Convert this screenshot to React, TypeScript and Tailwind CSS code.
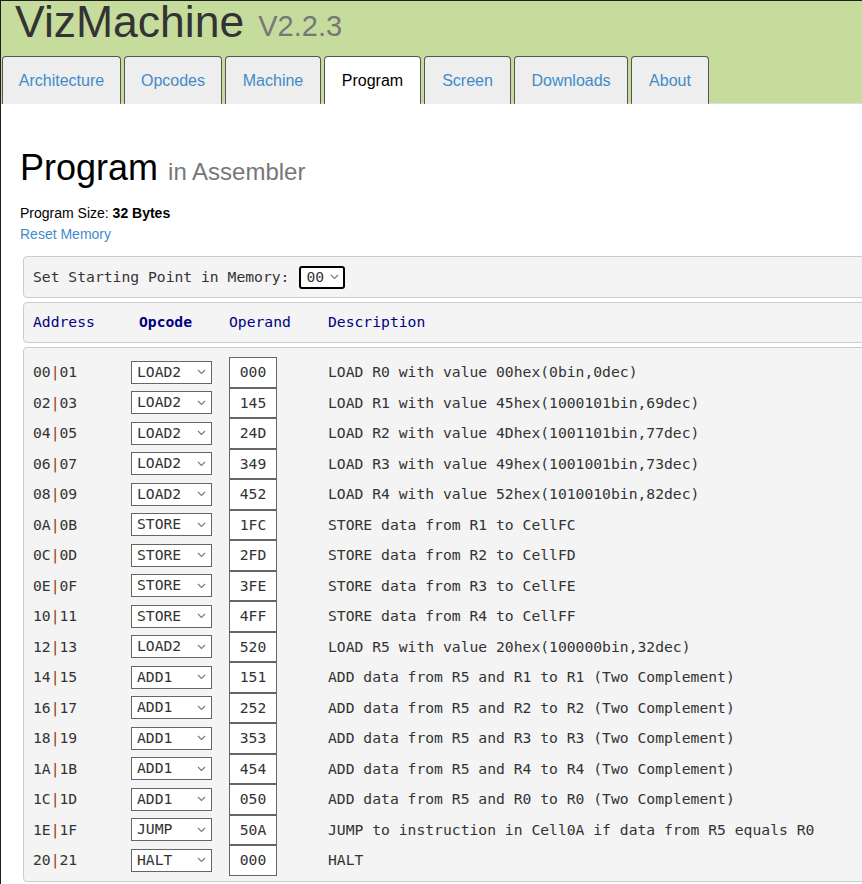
import React from "react";

type Row = { addr: [string, string]; op: string; operand: string; desc: string };

const rows: Row[] = [
  { addr: ["00", "01"], op: "LOAD2", operand: "000", desc: "LOAD R0 with value 00hex(0bin,0dec)" },
  { addr: ["02", "03"], op: "LOAD2", operand: "145", desc: "LOAD R1 with value 45hex(1000101bin,69dec)" },
  { addr: ["04", "05"], op: "LOAD2", operand: "24D", desc: "LOAD R2 with value 4Dhex(1001101bin,77dec)" },
  { addr: ["06", "07"], op: "LOAD2", operand: "349", desc: "LOAD R3 with value 49hex(1001001bin,73dec)" },
  { addr: ["08", "09"], op: "LOAD2", operand: "452", desc: "LOAD R4 with value 52hex(1010010bin,82dec)" },
  { addr: ["0A", "0B"], op: "STORE", operand: "1FC", desc: "STORE data from R1 to CellFC" },
  { addr: ["0C", "0D"], op: "STORE", operand: "2FD", desc: "STORE data from R2 to CellFD" },
  { addr: ["0E", "0F"], op: "STORE", operand: "3FE", desc: "STORE data from R3 to CellFE" },
  { addr: ["10", "11"], op: "STORE", operand: "4FF", desc: "STORE data from R4 to CellFF" },
  { addr: ["12", "13"], op: "LOAD2", operand: "520", desc: "LOAD R5 with value 20hex(100000bin,32dec)" },
  { addr: ["14", "15"], op: "ADD1", operand: "151", desc: "ADD data from R5 and R1 to R1 (Two Complement)" },
  { addr: ["16", "17"], op: "ADD1", operand: "252", desc: "ADD data from R5 and R2 to R2 (Two Complement)" },
  { addr: ["18", "19"], op: "ADD1", operand: "353", desc: "ADD data from R5 and R3 to R3 (Two Complement)" },
  { addr: ["1A", "1B"], op: "ADD1", operand: "454", desc: "ADD data from R5 and R4 to R4 (Two Complement)" },
  { addr: ["1C", "1D"], op: "ADD1", operand: "050", desc: "ADD data from R5 and R0 to R0 (Two Complement)" },
  { addr: ["1E", "1F"], op: "JUMP", operand: "50A", desc: "JUMP to instruction in Cell0A if data from R5 equals R0" },
  { addr: ["20", "21"], op: "HALT", operand: "000", desc: "HALT" },
];

// tab label + measured width
const tabs: [string, string][] = [
  ["Architecture", "w-[119px]"],
  ["Opcodes", "w-[98px]"],
  ["Machine", "w-[96px]"],
  ["Program", "w-[97px]"],
  ["Screen", "w-[87px]"],
  ["Downloads", "w-[114px]"],
  ["About", "w-[78px]"],
];

const mono = "font-['DejaVu_Sans_Mono',monospace] text-[14.7px]";

function Chevron() {
  return (
    <svg width="9" height="6" viewBox="0 0 9 6" className="shrink-0">
      <path d="M1 1 L4.5 4.5 L8 1" fill="none" stroke="#777" strokeWidth="1.1" />
    </svg>
  );
}

export default function App() {
  return (
    <div className="w-[862px] h-[884px] overflow-hidden bg-white border-t border-l border-[#1e1e1e] font-['Liberation_Sans',Arial,sans-serif]">
      {/* Header */}
      <div className="bg-[#c5dc9d]">
        <div className="h-[55px] pl-[14px] flex items-start">
          <span className="text-[44.5px] leading-[42px] text-[#333]">VizMachine</span>
          <span className="ml-[14px] text-[29px] leading-[42px] text-[#777] pt-[4px]">V2.2.3</span>
        </div>
        <div className="flex pl-[1px] border-b border-[#ddd]">
          {tabs.map(([t, w]) => (
            <div
              key={t}
              className={`${w} h-[48px] -mb-px mr-[3px] flex items-center justify-center text-[16px] rounded-t-[4px] border border-b-0 border-[#555] ${
                t === "Program" ? "bg-white text-black" : "bg-[#eeeeee] text-[#428bca]"
              }`}
            >
              {t}
            </div>
          ))}
        </div>
      </div>

      {/* Body */}
      <div className="pl-[19px]">
        <h1 className="mt-[44px] text-[36px] leading-[40px] text-black">
          Program <span className="text-[24px] text-[#777]">in Assembler</span>
        </h1>
        <div className="mt-[11px] text-[14px] leading-[21px] text-black">
          Program Size: <b>32 Bytes</b>
        </div>
        <div className="text-[14px] leading-[21px] text-[#428bca]">Reset Memory</div>

        {/* Starting point */}
        <div className={`mt-[11px] ml-[3px] w-[900px] h-[42px] bg-[#f4f4f4] border border-[#ccc] rounded-[4px] pl-[9px] flex items-center gap-[10px] ${mono} text-[#333]`}>
          <span>Set Starting Point in Memory:</span>
          <div className="h-[23px] w-[46px] border-2 border-black rounded-[3px] bg-white flex items-center pl-[5px] pr-[4px] justify-between">
            <span className="leading-none">00</span>
            <Chevron />
          </div>
        </div>

        {/* Column headers */}
        <div className={`mt-[4px] ml-[3px] w-[900px] h-[41px] bg-[#f4f4f4] border border-[#ccc] rounded-[4px] pl-[9px] flex items-center ${mono} text-[#000080]`}>
          <span className="w-[98px]">Address</span>
          <span className="w-[98px] pl-[8px] font-bold">Opcode</span>
          <span className="w-[99px]">Operand</span>
          <span>Description</span>
        </div>

        {/* Program rows */}
        <div className={`mt-[4px] ml-[3px] w-[900px] bg-[#f4f4f4] border border-[#ccc] rounded-[4px] pl-[9px] pt-[9px] pb-[5px] ${mono} text-[#333]`}>
          {rows.map((r) => (
            <div key={r.addr[0]} className="h-[30.5px] flex items-center">
              <span className="w-[98px] whitespace-pre">
                {r.addr[0]}
                <span className="text-[#993300]">|</span>
                {r.addr[1]}
              </span>
              <div className="w-[98px]">
                <div className="h-[23px] w-[81px] border border-[#666] bg-white flex items-center justify-between pl-[5px] pr-[5px]">
                  <span className="leading-none">{r.op}</span>
                  <Chevron />
                </div>
              </div>
              <div className="w-[99px] h-full">
                <div className="h-full w-[48px] border border-[#666] bg-white flex items-center justify-center">
                  {r.operand}
                </div>
              </div>
              <span className="whitespace-pre">{r.desc}</span>
            </div>
          ))}
        </div>
      </div>
    </div>
  );
}
